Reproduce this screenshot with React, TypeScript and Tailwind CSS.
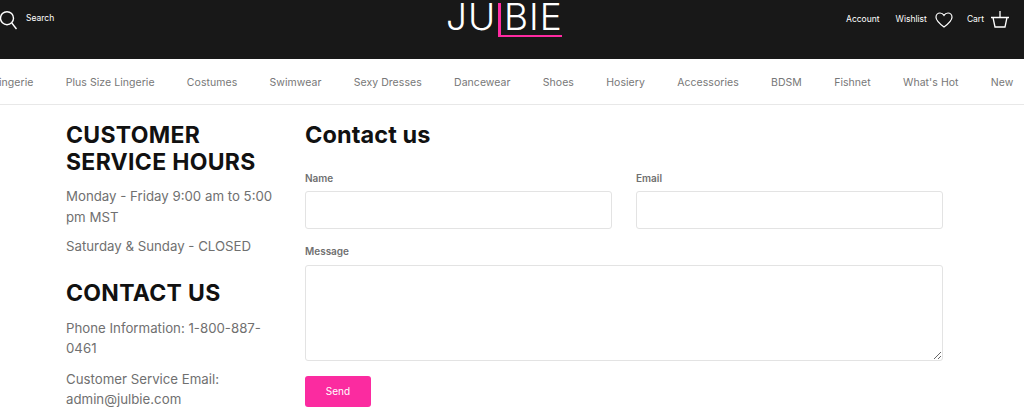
import type { ReactNode } from 'react'

const navItems = ['Lingerie', 'Plus Size Lingerie', 'Costumes', 'Swimwear', 'Sexy Dresses', 'Dancewear', 'Shoes', 'Hosiery', 'Accessories', 'BDSM', 'Fishnet', "What's Hot", 'New']

function Header() {
  return (
    <header className="h-[59px] bg-[#181818] text-white flex items-start justify-between overflow-hidden relative">
      <div className="flex items-center gap-[9px] mt-[11px]">
        <svg width="17" height="19" viewBox="0 0 17 19" fill="none" stroke="currentColor" strokeWidth="1.4">
          <circle cx="7" cy="7.200" r="6.500" />
          <path d="M11.800 12l4.700 6" />
        </svg>
        <span className="text-[8.5px] leading-[14px] -mt-[5px]">Search</span>
      </div>

      {/* logo */}
      <div className="absolute left-[446px] top-0 w-[118px] h-[38px]">
        <span className="absolute left-0 top-0 text-[37px] leading-[34px] font-[350] tracking-[1px] text-white">JU</span>
        <span className="absolute left-[58px] top-0 text-[37px] leading-[34px] font-[350] tracking-[1px] text-white">BIE</span>
        <div className="absolute left-[52px] top-[3px] w-[3px] h-[34px] bg-[#ff2aa1]" />
        <div className="absolute left-[52px] top-[35px] w-[64px] h-[2px] bg-[#ff2aa1]" />
      </div>

      <div className="flex items-center h-[17px] mt-[11px] pr-[14px] text-[8.5px]">
        <span className="mr-[16px]">Account</span>
        <span className="mr-[8px]">Wishlist</span>
        <svg width="18" height="16" viewBox="0 0 18 16" fill="none" stroke="currentColor" strokeWidth="1.2" className="mr-[14px]">
          <path d="M9 15C5 12 1 9 1 5.200 1 2.800 2.900 1 5 1c1.700 0 3.100.900 4 2.400C9.900 1.900 11.300 1 13 1c2.100 0 4 1.800 4 4.200C17 9 13 12 9 15z" />
        </svg>
        <span className="mr-[6px]">Cart</span>
        <svg width="20" height="17" viewBox="0 0 20 17" fill="none" stroke="currentColor" strokeWidth="1.3">
          <path d="M1 6.500h18M3 6.500l2 9.500h10l2-9.500M10 6.500V0" />
        </svg>
      </div>
    </header>
  )
}

function Nav() {
  return (
    <nav className="h-[46px] pt-[2px] border-b border-[#e8e8e8] flex items-center gap-[32.25px] overflow-hidden whitespace-nowrap text-[10.5px] tracking-[0.05px] text-[#777]">
      {navItems.map((item, index) => (
        <a key={item} className={index === 0 ? 'shrink-0 -ml-[7px]' : 'shrink-0'}>{item}</a>
      ))}
    </nav>
  )
}

function SidebarHeading({ children, className }: { children: ReactNode; className: string }) {
  return <h2 className={`text-[23px] leading-[27px] tracking-[0.3px] font-bold text-[#111] ${className}`}>{children}</h2>
}

function Sidebar() {
  return (
    <aside className="w-[215px] shrink-0 mt-[1px] text-[#707070] text-[13.25px] leading-[20.5px]">
      <SidebarHeading className="mb-[10px]">CUSTOMER SERVICE HOURS</SidebarHeading>
      <p className="mb-[9px]">Monday - Friday 9:00 am to 5:00 pm MST</p>
      <p>Saturday &amp; Sunday - CLOSED</p>
      <SidebarHeading className="mt-[23px] mb-[11px]">CONTACT US</SidebarHeading>
      <p className="mb-[10px]">Phone Information: 1-800-887-0461</p>
      <p>Customer Service Email: admin@julbie.com</p>
    </aside>
  )
}

function ContactForm() {
  const inputClass = 'block w-full h-[38px] rounded-[3px] border border-[#e3e3e3] bg-white'
  const labelClass = 'block text-[10px] leading-[14px] font-semibold text-[#707070]'
  return (
    <section className="w-[638px]">
      <h1 className="text-[23.5px] leading-[28px] tracking-[0.1px] font-bold text-[#111] mb-[22px]">Contact us</h1>
      <div className="grid grid-cols-2 gap-x-[24px]">
        <label className="block">
          <span className={`${labelClass} mb-[6px]`}>Name</span>
          <input className={inputClass} />
        </label>
        <label className="block">
          <span className={`${labelClass} mb-[6px]`}>Email</span>
          <input className={inputClass} />
        </label>
      </div>
      <label className="block mt-[15px]">
        <span className={`${labelClass} mb-[7px]`}>Message</span>
        <textarea className="block w-full h-[96px] rounded-[3px] border border-[#e3e3e3] bg-white" />
      </label>
      <button className="mt-[15px] w-[66px] h-[31px] rounded-[3px] bg-[#fb2ba0] text-white text-[10px]">Send</button>
    </section>
  )
}

export default function App() {
  return (
    <div className="h-[418px] overflow-hidden bg-white font-['Inter',sans-serif]">
      <Header />
      <Nav />
      <main className="flex pl-[66px] pt-[16px] gap-[24px]">
        <Sidebar />
        <ContactForm />
      </main>
    </div>
  )
}
